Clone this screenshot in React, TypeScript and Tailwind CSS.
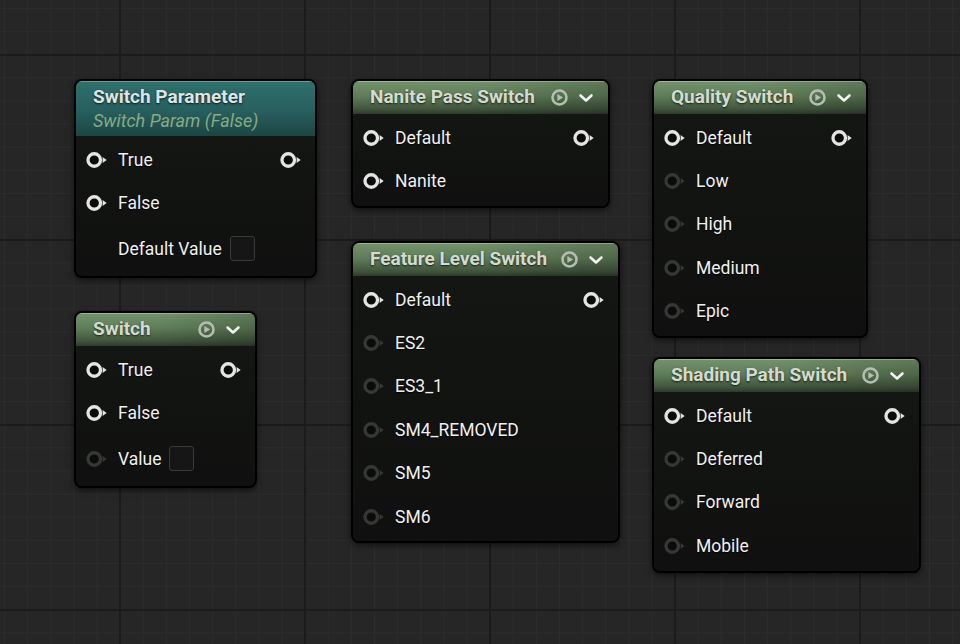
import React from 'react';

type Row = { label: string; pin?: 'on' | 'off' | 'none'; out?: boolean; check?: boolean };

type NodeProps = {
  x: number;
  y: number;
  w: number;
  title: string;
  subtitle?: string;
  teal?: boolean;
  rows: Row[];
};

function PinIcon({ on }: { on: boolean }) {
  const c = on ? '#e4e4e4' : '#363836';
  return (
    <svg width="22" height="18" viewBox="0 0 20 16" className="shrink-0">
      <circle cx="7.5" cy="8" r="5.7" fill="#0b0b0b" stroke={c} strokeWidth="3" />
      <path d="M15.1 5.2 L18.8 8 L15.1 10.8 Z" fill={c} />
    </svg>
  );
}

function PlayIcon() {
  return (
    <svg width="17" height="17" viewBox="0 0 16 16" className="shrink-0">
      <circle cx="8" cy="8" r="6.6" fill="none" stroke="#b6beb4" strokeWidth="2.4" />
      <path d="M6 4.6 L11.4 8 L6 11.4 Z" fill="#b6beb4" />
    </svg>
  );
}

function Chevron() {
  return (
    <svg width="16" height="16" viewBox="0 0 16 16" className="shrink-0">
      <path d="M2.5 5.5 L8 10.5 L13.5 5.5" fill="none" stroke="#f2f2f2" strokeWidth="2.6" strokeLinecap="round" strokeLinejoin="round" />
    </svg>
  );
}

function GraphNode({ x, y, w, title, subtitle, teal, rows }: NodeProps) {
  return (
    <div
      className="absolute rounded-[8px] border-2 border-black bg-[#121412] shadow-[0_2px_6px_rgba(0,0,0,0.6)] overflow-hidden"
      style={{ left: x - 1, top: y - 1, width: w + 2 }}
    >
      {teal ? (
        <div className="h-[55px] flex flex-col justify-center pl-[17px] bg-[linear-gradient(180deg,#2f706d_0%,#275f5e_55%,#1c4543_100%)] shadow-[inset_0_1px_0_rgba(255,255,255,0.3)]">
          <div className="text-[19px] leading-[24px] font-bold text-[#dde5e3] [text-shadow:0_1px_2px_rgba(0,0,0,0.8)]">
            {title}
          </div>
          <div className="text-[18px] leading-[22px] italic text-[#88aa86] mt-[1px]">{subtitle}</div>
        </div>
      ) : (
        <div className="h-[33px] flex items-center pl-[17px] pr-[14px] bg-[linear-gradient(90deg,rgba(0,0,0,0)_45%,rgba(0,0,0,0.18)_100%),linear-gradient(180deg,#74936d_0%,#5f7e58_45%,#41553d_85%,#2e3a2c_100%)] shadow-[inset_0_1px_0_rgba(255,255,255,0.3)]">
          <div className="text-[19px] font-bold text-[#d3dbd1] whitespace-nowrap [text-shadow:0_1px_2px_rgba(0,0,0,0.7)]">
            {title}
          </div>
          <div className="flex-1 min-w-[5px]" />
          <PlayIcon />
          <div className="w-[10px]" />
          <Chevron />
        </div>
      )}
      <div className="pt-[2px] pb-[3px] bg-[linear-gradient(180deg,#141613,#0f100f)]">
        {rows.map((r) => (
          <div key={r.label} className={`flex items-center ${r.check ? 'h-[48px]' : 'h-[43.4px]'}`}>
            <div className="ml-[10px] w-[22px] flex">
              {r.pin !== 'none' && <PinIcon on={r.pin === 'on'} />}
            </div>
            <span className="ml-[10px] text-[17.5px] text-[#f0f0f0] [text-shadow:0_1px_1px_rgba(0,0,0,0.9)] whitespace-nowrap">
              {r.label}
            </span>
            {r.check && (
              <div className="ml-[8px] w-[25px] h-[25px] rounded-[3px] border border-[#3a3a3a] bg-[#161616]" />
            )}
            <div className="flex-1" />
            {r.out && (
              <div className="mr-[13px]">
                <PinIcon on />
              </div>
            )}
          </div>
        ))}
      </div>
    </div>
  );
}

export default function App() {
  return (
    <div className="relative w-[960px] h-[644px] overflow-hidden font-['Roboto',sans-serif] bg-[#262626] bg-[linear-gradient(to_right,#1b1b1b_2px,transparent_2px),linear-gradient(to_bottom,#1b1b1b_2px,transparent_2px),linear-gradient(to_right,#2c2c2c_1px,transparent_1px),linear-gradient(to_bottom,#2c2c2c_1px,transparent_1px)] bg-[size:185px_185px,185px_185px,23.125px_23.125px,23.125px_23.125px] bg-[position:119px_54px,119px_54px,4px_8px,4px_8px]">
      <GraphNode
        x={75}
        y={80}
        w={241}
        teal
        title="Switch Parameter"
        subtitle="Switch Param (False)"
        rows={[
          { label: 'True', pin: 'on', out: true },
          { label: 'False', pin: 'on' },
          { label: 'Default Value', pin: 'none', check: true },
        ]}
      />
      <GraphNode
        x={75}
        y={312}
        w={181}
        title="Switch"
        rows={[
          { label: 'True', pin: 'on', out: true },
          { label: 'False', pin: 'on' },
          { label: 'Value', pin: 'off', check: true },
        ]}
      />
      <GraphNode
        x={352}
        y={80}
        w={257}
        title="Nanite Pass Switch"
        rows={[
          { label: 'Default', pin: 'on', out: true },
          { label: 'Nanite', pin: 'on' },
        ]}
      />
      <GraphNode
        x={352}
        y={242}
        w={267}
        title="Feature Level Switch"
        rows={[
          { label: 'Default', pin: 'on', out: true },
          { label: 'ES2', pin: 'off' },
          { label: 'ES3_1', pin: 'off' },
          { label: 'SM4_REMOVED', pin: 'off' },
          { label: 'SM5', pin: 'off' },
          { label: 'SM6', pin: 'off' },
        ]}
      />
      <GraphNode
        x={653}
        y={80}
        w={214}
        title="Quality Switch"
        rows={[
          { label: 'Default', pin: 'on', out: true },
          { label: 'Low', pin: 'off' },
          { label: 'High', pin: 'off' },
          { label: 'Medium', pin: 'off' },
          { label: 'Epic', pin: 'off' },
        ]}
      />
      <GraphNode
        x={653}
        y={358}
        w={267}
        title="Shading Path Switch"
        rows={[
          { label: 'Default', pin: 'on', out: true },
          { label: 'Deferred', pin: 'off' },
          { label: 'Forward', pin: 'off' },
          { label: 'Mobile', pin: 'off' },
        ]}
      />
    </div>
  );
}
